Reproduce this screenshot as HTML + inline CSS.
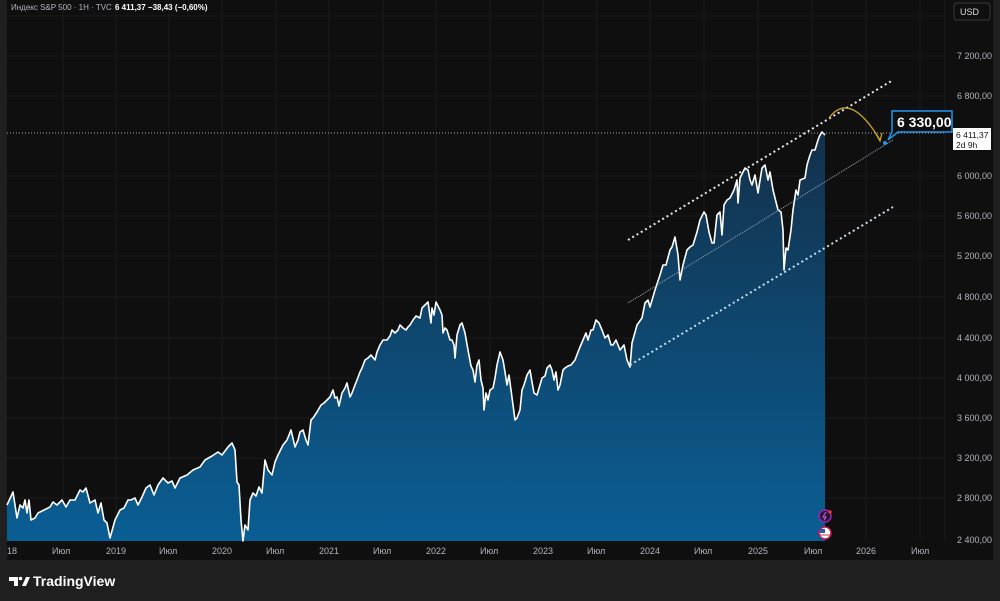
<!DOCTYPE html>
<html><head><meta charset="utf-8"><style>
html,body{margin:0;padding:0;background:#1f1f1f;width:1000px;height:601px;overflow:hidden;font-family:"Liberation Sans",sans-serif}
svg{position:absolute;left:0;top:0}
</style></head><body>
<svg width="1000" height="601" viewBox="0 0 1000 601">
<defs>
<linearGradient id="g" gradientUnits="userSpaceOnUse" x1="0" y1="130" x2="0" y2="541">
<stop offset="0" stop-color="#13304a"/><stop offset="1" stop-color="#0a5e94"/>
</linearGradient>
</defs>
<rect x="0" y="0" width="1000" height="601" fill="#1f1f1f"/>
<rect x="7" y="0" width="986" height="560" fill="#0f0f0f"/>
<g stroke="#1b1b1b" stroke-width="1">
<line x1="63" y1="0" x2="63" y2="541"/><line x1="116" y1="0" x2="116" y2="541"/><line x1="169" y1="0" x2="169" y2="541"/><line x1="222" y1="0" x2="222" y2="541"/><line x1="276" y1="0" x2="276" y2="541"/><line x1="329" y1="0" x2="329" y2="541"/><line x1="383" y1="0" x2="383" y2="541"/><line x1="436" y1="0" x2="436" y2="541"/><line x1="490" y1="0" x2="490" y2="541"/><line x1="543" y1="0" x2="543" y2="541"/><line x1="597" y1="0" x2="597" y2="541"/><line x1="650" y1="0" x2="650" y2="541"/><line x1="704" y1="0" x2="704" y2="541"/><line x1="758" y1="0" x2="758" y2="541"/><line x1="812" y1="0" x2="812" y2="541"/><line x1="866" y1="0" x2="866" y2="541"/><line x1="920" y1="0" x2="920" y2="541"/>
<line x1="7" y1="16" x2="945" y2="16"/><line x1="7" y1="56" x2="945" y2="56"/><line x1="7" y1="96" x2="945" y2="96"/><line x1="7" y1="176" x2="945" y2="176"/><line x1="7" y1="216" x2="945" y2="216"/><line x1="7" y1="256" x2="945" y2="256"/><line x1="7" y1="297" x2="945" y2="297"/><line x1="7" y1="338" x2="945" y2="338"/><line x1="7" y1="378" x2="945" y2="378"/><line x1="7" y1="418" x2="945" y2="418"/><line x1="7" y1="458" x2="945" y2="458"/><line x1="7" y1="498" x2="945" y2="498"/>
</g>
<polygon fill="url(#g)" stroke="none" points="7,541 7,505 13,492 17,518 20,505 23,508 25,500 27,513 29,500 31,520 35,518 38,513 44,510 50,507 53,502 57,505 62,500 66,507 70,500 75,500 80,490 83,492 86,488 90,503 95,500 98,513 101,503 104,520 107,523 110,538 115,520 120,510 124,508 128,500 131,500 135,498 138,505 142,497 146,488 150,485 154,495 158,485 163,478 168,483 172,481 175,488 180,478 187,475 193,470 200,467 205,460 212,456 218,452 222,455 228,447 232,443 235,450 237,482 239,485 241,520 243,541 245,525 248,530 250,500 253,493 256,496 259,487 262,493 265,460 268,470 272,475 275,462 278,455 283,445 287,440 291,430 295,447 298,440 300,432 303,430 306,440 308,445 311,420 313,418 317,412 321,405 324,403 327,400 330,397 333,390 335,398 337,397 339,406 342,393 345,388 347,383 350,397 352,393 355,385 357,380 360,372 362,368 365,360 368,358 371,355 375,360 377,352 380,345 383,340 387,340 390,336 392,330 395,333 398,330 400,325 403,328 406,330 408,327 410,325 413,320 416,316 420,318 422,308 425,305 428,302 431,323 432,308 434,315 436,302 440,310 442,315 443,333 445,328 447,330 450,340 452,340 454,345 455,358 457,335 460,325 462,323 465,333 468,350 471,366 473,370 475,382 477,365 479,360 481,380 483,388 484,410 486,393 488,400 490,390 493,388 495,378 497,365 500,352 503,360 505,372 507,385 509,375 511,390 513,405 515,420 517,418 520,410 522,390 524,385 527,375 530,370 532,382 534,393 537,395 540,385 542,378 545,376 547,368 550,365 552,370 554,380 556,372 558,390 560,385 563,370 565,368 568,366 571,365 575,360 578,352 580,347 583,340 586,333 588,340 591,330 593,330 596,320 599,323 602,330 605,338 608,335 611,345 613,345 616,340 620,350 624,345 627,360 630,367 632,343 637,325 642,318 645,303 648,300 650,307 655,290 660,275 663,265 666,265 670,250 672,247 675,237 678,255 680,280 683,265 687,250 690,247 693,245 697,232 700,220 704,212 706,215 709,232 712,243 714,243 717,215 720,212 722,235 724,205 727,200 730,198 734,190 737,180 738,203 740,178 745,168 748,170 750,180 752,185 755,175 758,193 762,168 765,165 768,180 770,172 773,190 778,210 781,212 783,230 784,270 786,248 788,250 791,230 793,210 796,190 798,195 800,180 805,178 807,165 810,155 812,150 815,150 818,140 820,135 822,132 825,135 825,541"/>
<polyline fill="none" stroke="#fff" stroke-width="1.6" stroke-linejoin="round" points="7,505 13,492 17,518 20,505 23,508 25,500 27,513 29,500 31,520 35,518 38,513 44,510 50,507 53,502 57,505 62,500 66,507 70,500 75,500 80,490 83,492 86,488 90,503 95,500 98,513 101,503 104,520 107,523 110,538 115,520 120,510 124,508 128,500 131,500 135,498 138,505 142,497 146,488 150,485 154,495 158,485 163,478 168,483 172,481 175,488 180,478 187,475 193,470 200,467 205,460 212,456 218,452 222,455 228,447 232,443 235,450 237,482 239,485 241,520 243,541 245,525 248,530 250,500 253,493 256,496 259,487 262,493 265,460 268,470 272,475 275,462 278,455 283,445 287,440 291,430 295,447 298,440 300,432 303,430 306,440 308,445 311,420 313,418 317,412 321,405 324,403 327,400 330,397 333,390 335,398 337,397 339,406 342,393 345,388 347,383 350,397 352,393 355,385 357,380 360,372 362,368 365,360 368,358 371,355 375,360 377,352 380,345 383,340 387,340 390,336 392,330 395,333 398,330 400,325 403,328 406,330 408,327 410,325 413,320 416,316 420,318 422,308 425,305 428,302 431,323 432,308 434,315 436,302 440,310 442,315 443,333 445,328 447,330 450,340 452,340 454,345 455,358 457,335 460,325 462,323 465,333 468,350 471,366 473,370 475,382 477,365 479,360 481,380 483,388 484,410 486,393 488,400 490,390 493,388 495,378 497,365 500,352 503,360 505,372 507,385 509,375 511,390 513,405 515,420 517,418 520,410 522,390 524,385 527,375 530,370 532,382 534,393 537,395 540,385 542,378 545,376 547,368 550,365 552,370 554,380 556,372 558,390 560,385 563,370 565,368 568,366 571,365 575,360 578,352 580,347 583,340 586,333 588,340 591,330 593,330 596,320 599,323 602,330 605,338 608,335 611,345 613,345 616,340 620,350 624,345 627,360 630,367 632,343 637,325 642,318 645,303 648,300 650,307 655,290 660,275 663,265 666,265 670,250 672,247 675,237 678,255 680,280 683,265 687,250 690,247 693,245 697,232 700,220 704,212 706,215 709,232 712,243 714,243 717,215 720,212 722,235 724,205 727,200 730,198 734,190 737,180 738,203 740,178 745,168 748,170 750,180 752,185 755,175 758,193 762,168 765,165 768,180 770,172 773,190 778,210 781,212 783,230 784,270 786,248 788,250 791,230 793,210 796,190 798,195 800,180 805,178 807,165 810,155 812,150 815,150 818,140 820,135 822,132 825,135"/>
<line x1="7" y1="133" x2="945" y2="133" stroke="#aaa" stroke-width="1" stroke-dasharray="1,2"/>
<line x1="628" y1="240" x2="893" y2="80" stroke="#e8e8e8" stroke-width="2" stroke-dasharray="2,3"/>
<line x1="628" y1="303" x2="893" y2="140" stroke="#9ab" stroke-width="1" stroke-dasharray="1,1"/>
<line x1="630" y1="365" x2="893" y2="207" stroke="#cde" stroke-width="2" stroke-dasharray="2,3"/>
<path d="M829,118 Q850,90 880,140" fill="none" stroke="#c9a227" stroke-width="1.3"/>
<path d="M876,134 L880,141 L882,133" fill="none" stroke="#c9a227" stroke-width="1.3"/>
<circle cx="885" cy="143" r="2" fill="#2196f3"/>
<rect x="945" y="0" width="48" height="541" fill="#0f0f0f"/>
<line x1="945" y1="0" x2="945" y2="541" stroke="#1b1b1b"/>
<g fill="#b2b5be" font-size="9">
<text x="957" y="59">7 200,00</text><text x="957" y="99">6 800,00</text><text x="957" y="179">6 000,00</text><text x="957" y="219">5 600,00</text><text x="957" y="259">5 200,00</text><text x="957" y="300">4 800,00</text><text x="957" y="341">4 400,00</text><text x="957" y="381">4 000,00</text><text x="957" y="421">3 600,00</text><text x="957" y="461">3 200,00</text><text x="957" y="501">2 800,00</text><text x="957" y="543">2 400,00</text>
</g>
<path d="M892,111 H952 V132 H898 L888,140 L892,132 Z" fill="#0f0f0f" stroke="#2196f3" stroke-width="1.5"/>
<text x="897" y="127" fill="#fff" font-size="14" font-weight="bold">6 330,00</text>
<rect x="954" y="3" width="36" height="17" rx="3" fill="#0f0f0f" stroke="#3a3a3a"/>
<text x="960" y="15" fill="#ddd" font-size="9">USD</text>
<rect x="953" y="128" width="38" height="22" fill="#fff"/>
<text x="956" y="138" fill="#111" font-size="8.5">6 411,37</text>
<text x="956" y="148" fill="#111" font-size="8.5">2d 9h</text>
<g fill="#b2b5be" font-size="9">
<text x="7" y="554">18</text><text x="52" y="554">Июл</text><text x="106" y="554">2019</text><text x="159" y="554">Июл</text><text x="212" y="554">2020</text><text x="266" y="554">Июл</text><text x="319" y="554">2021</text><text x="373" y="554">Июл</text><text x="426" y="554">2022</text><text x="480" y="554">Июл</text><text x="533" y="554">2023</text><text x="587" y="554">Июл</text><text x="640" y="554">2024</text><text x="694" y="554">Июл</text><text x="748" y="554">2025</text><text x="804" y="554">Июл</text><text x="856" y="554">2026</text><text x="911" y="554">Июл</text>
</g>
<circle cx="825" cy="516" r="6" fill="#2a1438" stroke="#9c27b0" stroke-width="1.5"/>
<path d="M826,512 L823,517 H826 L824,520" stroke="#b45cd6" fill="none" stroke-width="1.2"/>
<circle cx="830" cy="512" r="1.7" fill="#f23645"/>
<circle cx="825" cy="533" r="6" fill="#fff" stroke="#c2185b" stroke-width="1.5"/>
<rect x="820" y="529" width="5" height="4" fill="#2a5ab0"/>
<line x1="820" y1="535" x2="830" y2="535" stroke="#d32f2f"/>
<text x="11" y="10" fill="#b2b5be" font-size="8">Индекс S&amp;P 500 · 1H · TVC</text>
<text x="115" y="10" fill="#fff" font-size="8" font-weight="bold">6 411,37  −38,43 (−0,60%)</text>
<g fill="#fff">
<path d="M9,577 H18 V586 H14 V581 H9 Z"/><circle cx="20.5" cy="578.5" r="1.8"/><path d="M22,586 L26,577 H30 L26,586 Z"/>
</g>
<text x="33" y="586" fill="#fff" font-size="14" font-weight="bold">TradingView</text>
</svg>
</body></html>
